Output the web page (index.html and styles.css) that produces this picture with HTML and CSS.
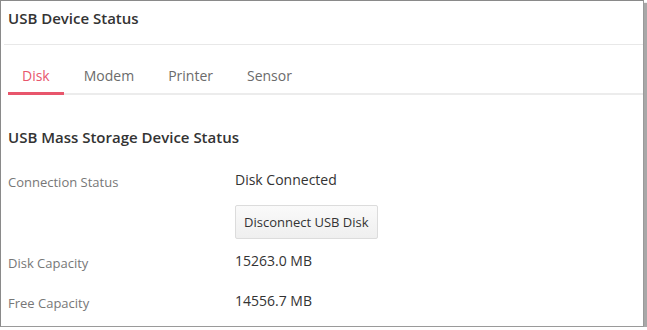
FILE: index.html
```html
<!DOCTYPE html>
<html lang="en">
<head>
    <meta charset="UTF-8">
    <meta name="viewport" content="width=device-width, initial-scale=1.0">
    <title>USB Device Status</title>
    <link rel="stylesheet" href="styles.css">
</head>
<body>

    <div class="panel">
        <div class="panel-header">USB Device Status</div>

        <ul class="tabs">
            <li class="tab active">Disk</li>
            <li class="tab">Modem</li>
            <li class="tab">Printer</li>
            <li class="tab">Sensor</li>
        </ul>

        <div class="panel-body">
            <h2 class="section-title">USB Mass Storage Device Status</h2>

            <div class="status-row row-action">
                <div class="status-label">Connection Status</div>
                <div class="status-value">
                    <span>Disk Connected</span>
                    <button type="button" class="btn">Disconnect USB Disk</button>
                </div>
            </div>

            <div class="status-row">
                <div class="status-label">Disk Capacity</div>
                <div class="status-value">15263.0 MB</div>
            </div>

            <div class="status-row">
                <div class="status-label">Free Capacity</div>
                <div class="status-value">14556.7 MB</div>
            </div>
        </div>
    </div>

</body>
</html>
```

FILE: styles.css
```css
body {
    margin: 0;
    font-family: "Open Sans", Arial, sans-serif;
    background: #fff;
    color: #333;
}
.panel {
    width: 642px;
    height: 325px;
    border: 1px solid #8a8a8a;
    border-right-color: #9a9a9a;
    border-bottom-color: #9a9a9a;
    box-shadow: 3px 3px 1px #a8a8a8;
    background: #fff;
    overflow: hidden;
}
.panel-header {
    margin-left: 3px;
    padding: 6px 4px 15px;
    line-height: 22px;
    font-size: 15px;
    font-weight: 600;
    color: #333;
    border-bottom: 1px solid #e8e8e8;
}
.tabs {
    display: flex;
    gap: 6px;
    list-style: none;
    margin: 0 0 0 7px;
    padding: 0;
    border-bottom: 2px solid #ececec;
}
.tab {
    padding: 20px 14px 5px;
    line-height: 22px;
    font-size: 14px;
    color: #6b6b6b;
    margin-bottom: -2px;
    border-bottom: 3px solid transparent;
}
.tab.active {
    color: #e8566c;
    border-bottom-color: #e8566c;
}
.panel-body {
    padding: 31px 7px 0;
}
.section-title {
    margin: 0 0 11px;
    line-height: 22px;
    font-size: 15px;
    font-weight: 600;
    color: #333;
}
.status-row {
    display: flex;
    padding: 10px 0 6px;
}
.status-row.row-action {
    padding-bottom: 1px;
}
.status-label {
    width: 227px;
    padding-top: 2px;
    line-height: 22px;
    font-size: 13px;
    color: #777;
}
.status-value {
    display: flex;
    flex-direction: column;
    align-items: flex-start;
    line-height: 22px;
    font-size: 14px;
    color: #333;
}
.btn {
    margin-top: 14px;
    height: 34px;
    padding: 0 8px;
    font-family: "Open Sans", Arial, sans-serif;
    font-size: 13px;
    color: #333;
    background: linear-gradient(#fafafa, #efefef);
    border: 1px solid #dcdcdc;
    border-radius: 2px;
}
```
